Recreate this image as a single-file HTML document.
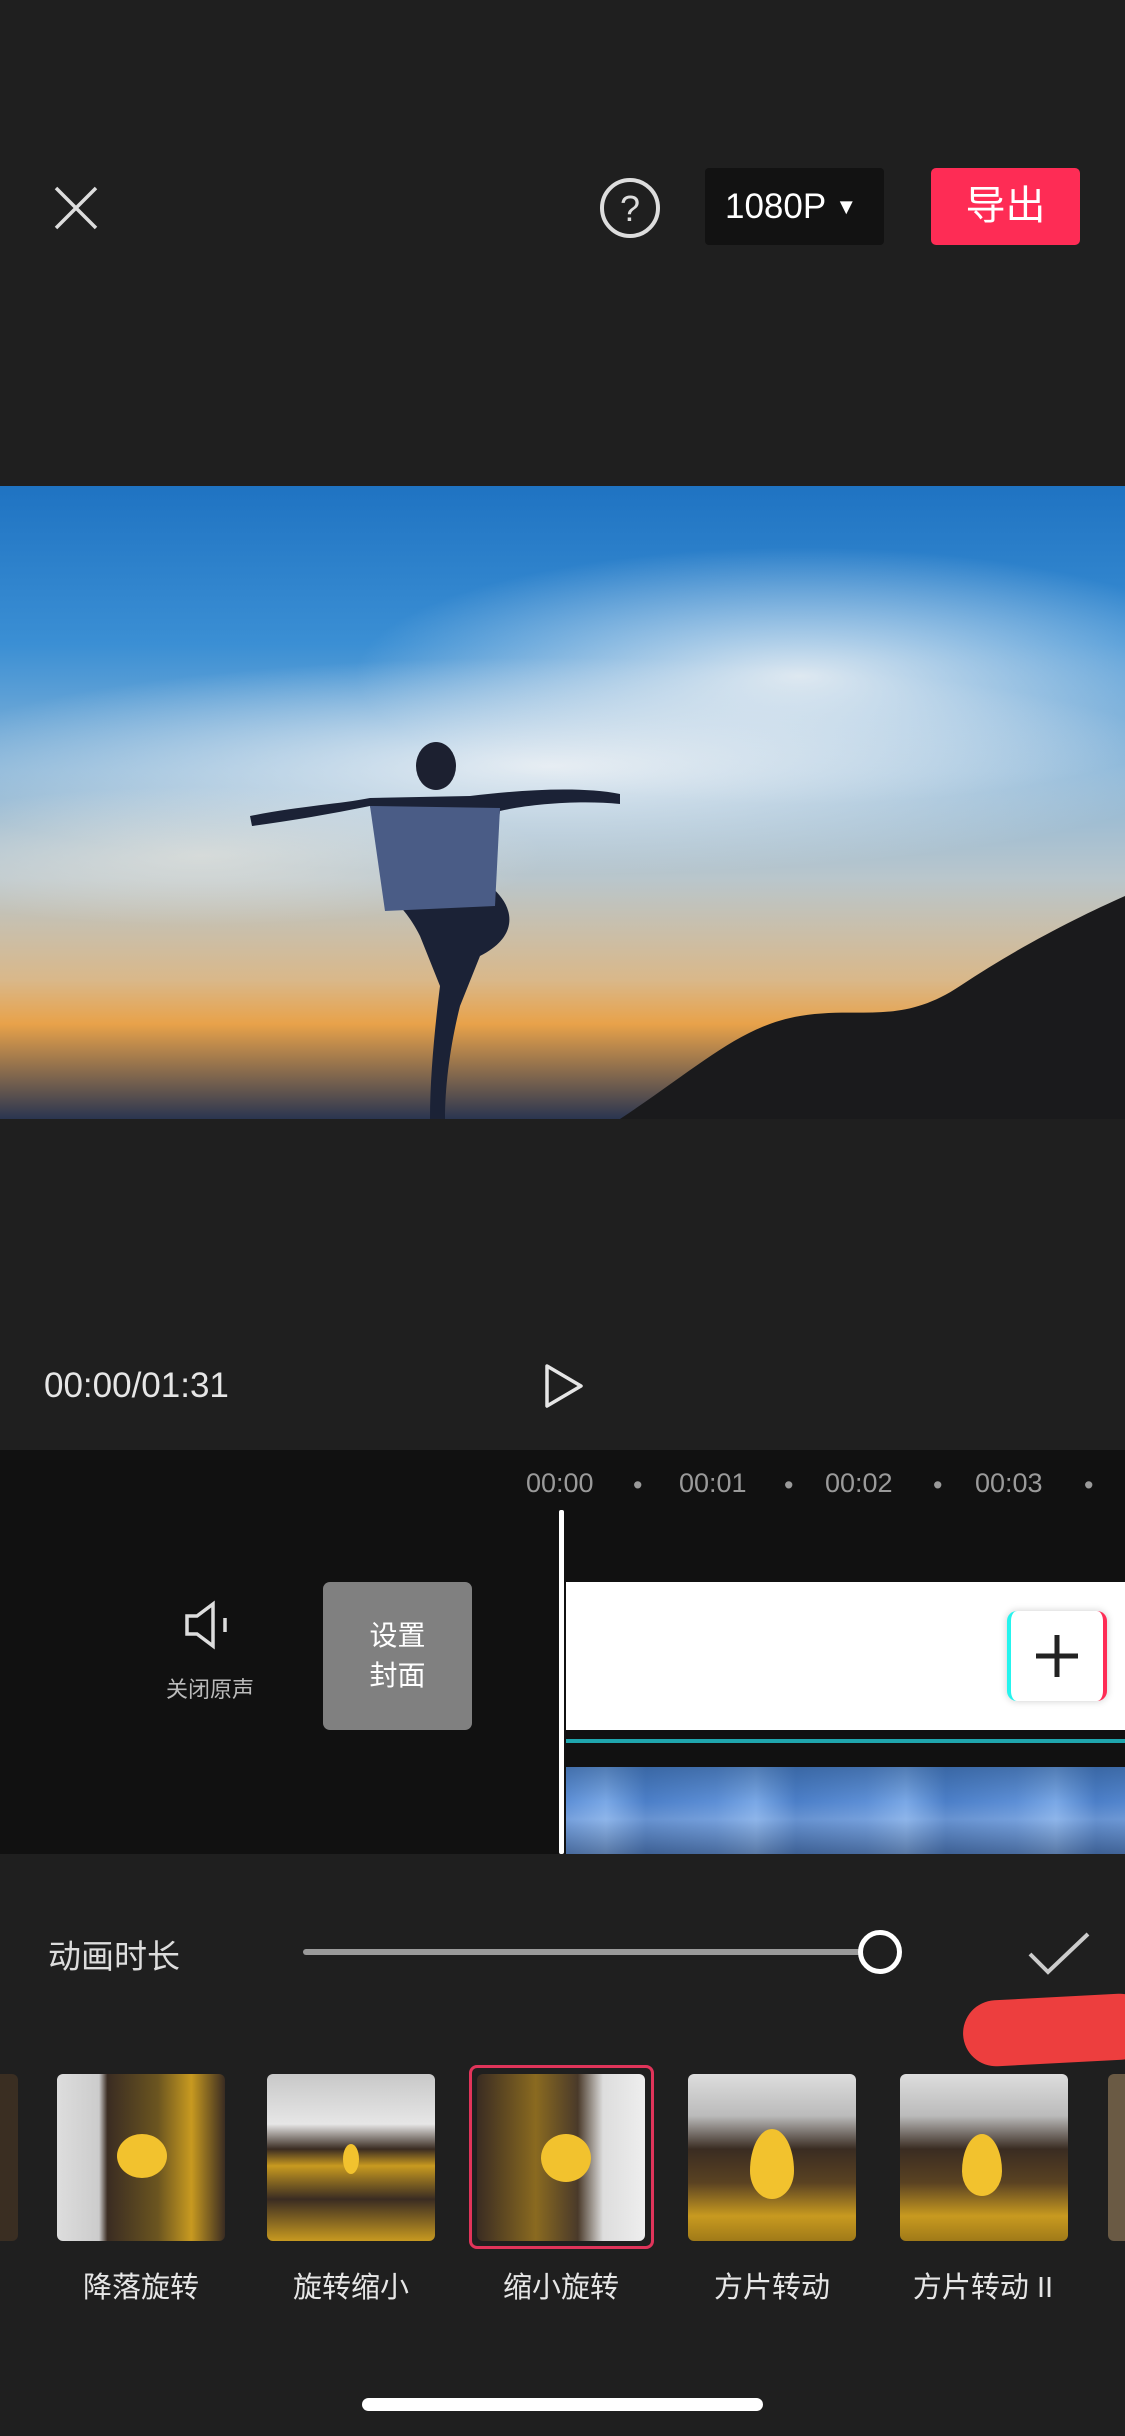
<!DOCTYPE html>
<html><head><meta charset="utf-8"><style>
*{margin:0;padding:0;box-sizing:border-box}
body{width:1125px;height:2436px;background:#1f1f1f;position:relative;overflow:hidden;font-family:"Liberation Sans","Noto Sans CJK SC",sans-serif;color:#fff}
.a{position:absolute}
.thumb{position:absolute;top:2074px;width:168px;height:167px;border-radius:6px;overflow:hidden;background:#3a2e22}
.lbl{position:absolute;top:2264px;font-size:29px;color:#e6e6e6;text-align:center;width:220px}
</style></head><body>
<svg class="a" style="left:52px;top:184px" width="48" height="48"><path d="M4 4L44 44M44 4L4 44" stroke="#ddd" stroke-width="3.5"/></svg>
<svg class="a" style="left:598px;top:176px" width="64" height="64"><circle cx="32" cy="32" r="28" fill="none" stroke="#ddd" stroke-width="4"/><text x="32" y="45" text-anchor="middle" font-size="36" fill="#ddd" font-family="Liberation Sans">?</text></svg>
<div class="a" style="left:705px;top:168px;width:179px;height:77px;background:#121212;border-radius:4px;font-size:35px;line-height:77px;padding-left:20px">1080P <span style="font-size:22px;position:relative;top:-4px">▼</span></div>
<div class="a" style="left:931px;top:168px;width:149px;height:77px;background:#fe2c55;border-radius:5px;font-size:40px;line-height:77px;text-align:center">导出</div>
<div class="a" style="left:0;top:486px;width:1125px;height:633px;overflow:hidden;background:linear-gradient(180deg,#1f73c2 0%,#3b8fd4 25%,#8ab6d8 45%,#b9c6cc 62%,#d9b88a 78%,#e8a24a 85%,#2a3550 100%)">
<div class="a" style="left:-100px;top:170px;width:1300px;height:220px;background:radial-gradient(ellipse,rgba(240,243,246,.9),rgba(240,243,246,0) 70%)"></div>
<div class="a" style="left:350px;top:60px;width:900px;height:260px;background:radial-gradient(ellipse,rgba(245,245,245,.85),rgba(245,245,245,0) 70%)"></div>
<div class="a" style="left:-150px;top:300px;width:700px;height:140px;background:radial-gradient(ellipse,rgba(240,235,225,.6),rgba(240,235,225,0) 70%)"></div>
<svg class="a" style="left:0;top:0" width="1125" height="633">
<path d="M620 633 C700 580 740 540 800 530 C860 520 900 540 960 500 C1020 460 1080 430 1125 410 L1125 633Z" fill="#1a1a1c"/>
<ellipse cx="436" cy="280" rx="20" ry="24" fill="#1c2030"/>
<path d="M250 330 C300 320 340 318 370 312 L470 310 C520 304 580 300 620 308 L620 318 C580 314 530 318 500 325 L490 400 C515 420 520 450 480 470 L460 520 C450 560 445 600 445 633 L430 633 C430 590 435 540 440 500 L420 450 C410 430 400 420 390 410 L370 320 C330 328 290 335 252 340Z" fill="#1b2236"/>
<path d="M370 320 L500 322 L495 420 L385 425Z" fill="#4a5c86"/>
</svg>
</div>
<div class="a" style="left:44px;top:1366px;font-size:35px;color:#e6e6e6">00:00/01:31</div>
<svg class="a" style="left:543px;top:1362px" width="44" height="48"><path d="M4 4L38 24L4 44Z" fill="none" stroke="#e6e6e6" stroke-width="3.5" stroke-linejoin="round"/></svg>
<div class="a" style="left:0;top:1450px;width:1125px;height:404px;background:#111"></div>
<div class="a" style="top:1468px;left:0;width:1125px;font-size:27px;color:#9a9a9a">
<span class="a" style="left:526px">00:00</span><span class="a" style="left:679px">00:01</span><span class="a" style="left:825px">00:02</span><span class="a" style="left:975px">00:03</span>
<span class="a" style="left:633px;top:2px">•</span><span class="a" style="left:784px;top:2px">•</span><span class="a" style="left:933px;top:2px">•</span><span class="a" style="left:1084px;top:2px">•</span>
</div>
<svg class="a" style="left:183px;top:1600px" width="50" height="50"><path d="M4 16H14L30 4V46L14 34H4Z" fill="none" stroke="#ddd" stroke-width="3.5"/><path d="M42 18V32" stroke="#ddd" stroke-width="3.5"/></svg>
<div class="a" style="left:150px;top:1672px;width:120px;text-align:center;font-size:22px;color:#bbb">关闭原声</div>
<div class="a" style="left:323px;top:1582px;width:149px;height:148px;background:#808080;border-radius:7px;font-size:28px;line-height:40px;text-align:center;padding-top:34px">设置<br>封面</div>
<div class="a" style="left:566px;top:1582px;width:559px;height:148px;background:#fff"></div>
<div class="a" style="left:1007px;top:1611px;width:100px;height:90px;background:#fff;border-radius:10px;border-left:4px solid #25f4ee;border-right:4px solid #fe2c55;box-shadow:0 0 8px rgba(0,0,0,.2)"><svg width="92" height="90"><path d="M46 24V66M25 45H67" stroke="#222" stroke-width="5"/></svg></div>
<div class="a" style="left:566px;top:1739px;width:559px;height:4px;background:#1fa6ae"></div>
<div class="a" style="left:566px;top:1767px;width:559px;height:87px;background:repeating-linear-gradient(90deg,#5d8fd6 0,#7aa8e6 40px,#4c7fc8 80px,#5d8fd6 150px);"></div>
<div class="a" style="left:566px;top:1767px;width:559px;height:87px;background:linear-gradient(180deg,rgba(40,80,130,.5) 0,rgba(255,255,255,0) 40%,rgba(255,255,255,.15) 60%,rgba(40,50,70,.4) 100%)"></div>
<div class="a" style="left:559px;top:1510px;width:5px;height:344px;background:#fff;border-radius:2px"></div>
<div class="a" style="left:48px;top:1930px;font-size:33px;color:#ddd">动画时长</div>
<div class="a" style="left:303px;top:1949px;width:577px;height:6px;background:#9a9a9a;border-radius:3px"></div>
<div class="a" style="left:858px;top:1930px;width:44px;height:44px;border-radius:50%;border:5px solid #fff;background:#1f1f1f"></div>
<svg class="a" style="left:1026px;top:1930px" width="66" height="48"><path d="M4 24L22 42L62 4" fill="none" stroke="#ccc" stroke-width="4"/></svg>
<div class="a" style="left:963px;top:1997px;width:190px;height:66px;background:#ed3e3e;border-radius:33px;transform:rotate(-3deg)"></div>
<div class="thumb" style="left:-150px"></div>
<div class="a" style="left:469px;top:2065px;width:185px;height:184px;border:3px solid #e0345a;border-radius:8px"></div>
<div class="thumb" style="left:57px;background:linear-gradient(90deg,#ddd 0,#ccc 25%,#3a2c22 30%,#6b5520 60%,#c89a20 80%,#3a2c22 100%)"><div class="a" style="left:60px;top:60px;width:50px;height:44px;border-radius:50%;background:#f2c22e"></div></div>
<div class="thumb" style="left:267px;background:linear-gradient(180deg,#c8c8c8 0,#e6e6e6 30%,#3a2c22 45%,#c89a20 55%,#3a2c22 75%,#c89a20 100%)"><div class="a" style="left:76px;top:70px;width:16px;height:30px;border-radius:50%;background:#f2c22e"></div></div>
<div class="thumb" style="left:477px;background:linear-gradient(90deg,#3a2c22 0,#8a6a20 35%,#4a3a2a 60%,#ddd 75%,#eee 100%)"><div class="a" style="left:64px;top:60px;width:50px;height:48px;border-radius:50%;background:#f2c22e"></div></div>
<div class="thumb" style="left:688px;background:linear-gradient(180deg,#ddd 0,#bbb 25%,#3a2c22 45%,#5a4222 65%,#c89a20 85%,#a07a18 100%)"><div class="a" style="left:62px;top:55px;width:44px;height:70px;border-radius:50% 50% 50% 50%/60% 60% 40% 40%;background:#f2c22e"></div></div>
<div class="thumb" style="left:900px;background:linear-gradient(180deg,#ddd 0,#bbb 25%,#3a2c22 45%,#5a4222 65%,#c89a20 85%,#a07a18 100%)"><div class="a" style="left:62px;top:60px;width:40px;height:62px;border-radius:50% 50% 50% 50%/60% 60% 40% 40%;background:#f2c22e"></div></div>
<div class="thumb" style="left:1108px;background:#6a5a44"></div>
<div class="lbl" style="left:31px">降落旋转</div>
<div class="lbl" style="left:241px">旋转缩小</div>
<div class="lbl" style="left:451px">缩小旋转</div>
<div class="lbl" style="left:662px">方片转动</div>
<div class="lbl" style="left:873px">方片转动 II</div>
<div class="a" style="left:362px;top:2398px;width:401px;height:13px;background:#fff;border-radius:7px"></div>
</body></html>
